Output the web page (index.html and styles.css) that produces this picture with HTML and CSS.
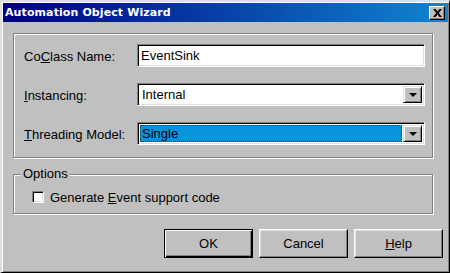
FILE: index.html
```html
<html>
<head>
  <title>Automation Object Wizard</title>
  <meta charset="utf-8">
  <link rel="stylesheet" href="styles.css">
</head>
<body>

<div class="window">
  <div class="titlebar">
    <span class="title">Automation Object Wizard</span>
    <div class="close">
      <svg width="9" height="8" viewBox="0 0 9 8">
        <path d="M0 0h2.5l2 2.6 2-2.6H9L5.8 4 9 8H6.5l-2-2.6-2 2.6H0l3.2-4z" fill="#000"/>
      </svg>
    </div>
  </div>

  <div class="content">
    <div class="group fields">
      <div class="row">
        <span class="label">Co<u>C</u>lass Name:</span>
        <div class="edit">EventSink</div>
      </div>
      <div class="row">
        <span class="label"><u>I</u>nstancing:</span>
        <div class="combo">
          <span class="value">Internal</span>
          <span class="drop"><i class="arrow"></i></span>
        </div>
      </div>
      <div class="row">
        <span class="label"><u>T</u>hreading Model:</span>
        <div class="combo">
          <span class="value selected">Single</span>
          <span class="drop"><i class="arrow"></i></span>
        </div>
      </div>
    </div>

    <div class="group options">
      <span class="legend">Options</span>
      <div class="check-row">
        <span class="checkbox"></span>
        <span>Generate <u>E</u>vent support code</span>
      </div>
    </div>

    <div class="buttons">
      <div class="btn default">OK</div>
      <div class="btn">Cancel</div>
      <div class="btn"><u>H</u>elp</div>
    </div>
  </div>
</div>

</body>
</html>
```

FILE: styles.css
```css
* {
  box-sizing: border-box;
}

body {
  margin: 0;
  font-family: "Liberation Sans", Arial, sans-serif;
  font-size: 13px;
  color: #000;
}

u {
  text-decoration: underline;
  text-underline-offset: 1px;
}

/* the dialog frame */
.window {
  width: 450px;
  height: 273px;
  background: #c0c0c0;
  border-style: solid;
  border-width: 2px 1px 1px 2px;
  border-color: #dfdfdf #000 #000 #dfdfdf;
  box-shadow: inset 1px 1px #fff, inset -1px -1px #808080;
  padding: 1px;
}

.titlebar {
  height: 19px;
  display: flex;
  align-items: center;
  justify-content: space-between;
  padding-left: 2px;
  background: linear-gradient(to right, #000080, #1084d0);
}

.title {
  font-family: "DejaVu Sans", sans-serif;
  font-weight: bold;
  font-size: 11px;
  letter-spacing: 0.1px;
  color: #fff;
}

.close {
  width: 16px;
  height: 14px;
  margin-right: 3px;
  background: #c0c0c0;
  border-style: solid;
  border-width: 1px;
  border-color: #fff #000 #000 #fff;
  box-shadow: inset -1px -1px #808080;
  display: flex;
  align-items: center;
  justify-content: center;
}

.content {
  padding: 11px 0 0 10px;
}

/* etched group boxes */
.group {
  width: 420px;
  border: 1px solid #808080;
  box-shadow: inset 1px 1px #fff, 1px 1px #fff;
  position: relative;
}

.fields {
  display: grid;
  grid-template-columns: 113px 288px;
  row-gap: 16px;
  padding: 10px 0 12px 10px;
}

.row {
  display: contents;
}

.label {
  align-self: center;
  padding-top: 2px;
}

.edit, .combo {
  height: 23px;
  background: #fff;
  border-style: solid;
  border-width: 1px;
  border-color: #808080 #fff #fff #808080;
  box-shadow: inset 1px 1px #000, inset -1px -1px #dfdfdf;
  padding: 2px;
}

.edit {
  padding-left: 3px;
  line-height: 18px;
}

.combo {
  display: flex;
}

.value {
  flex: 1;
  line-height: 18px;
  padding-left: 2px;
}

.selected {
  background: #0a93db;
  outline: 1px dotted #333;
  outline-offset: -1px;
  margin-right: 1px;
}

.drop {
  width: 19px;
  background: #c0c0c0;
  border-style: solid;
  border-width: 1px;
  border-color: #dfdfdf #000 #000 #dfdfdf;
  box-shadow: inset 1px 1px #fff, inset -1px -1px #808080;
  display: flex;
  align-items: center;
  justify-content: center;
}

.arrow {
  width: 0;
  height: 0;
  border-left: 4px solid transparent;
  border-right: 4px solid transparent;
  border-top: 4px solid #000;
  margin-top: 1px;
}

.options {
  margin-top: 16px;
  height: 40px;
  padding: 16px 0 0 18px;
}

.legend {
  position: absolute;
  left: 7px;
  top: -9px;
  padding: 0 2px;
  background: #c0c0c0;
}

.check-row {
  display: flex;
  align-items: center;
  gap: 6px;
  height: 12px;
}

.checkbox {
  width: 12px;
  height: 12px;
  background: #fff;
  border-style: solid;
  border-width: 1px;
  border-color: #808080 #fff #fff #808080;
  box-shadow: inset 1px 1px #000, inset -1px -1px #dfdfdf;
}

.buttons {
  display: flex;
  gap: 6px;
  margin-top: 15px;
  padding-left: 151px;
}

.btn {
  width: 89px;
  height: 29px;
  display: flex;
  align-items: center;
  justify-content: center;
  border-style: solid;
  border-width: 1px;
  border-color: #fff #000 #000 #fff;
  box-shadow: inset -1px -1px #808080, inset 1px 1px #dfdfdf;
}

.default {
  border-color: #000;
  box-shadow: inset 1px 1px #fff, inset -1px -1px #000, inset -2px -2px #808080;
}
```
